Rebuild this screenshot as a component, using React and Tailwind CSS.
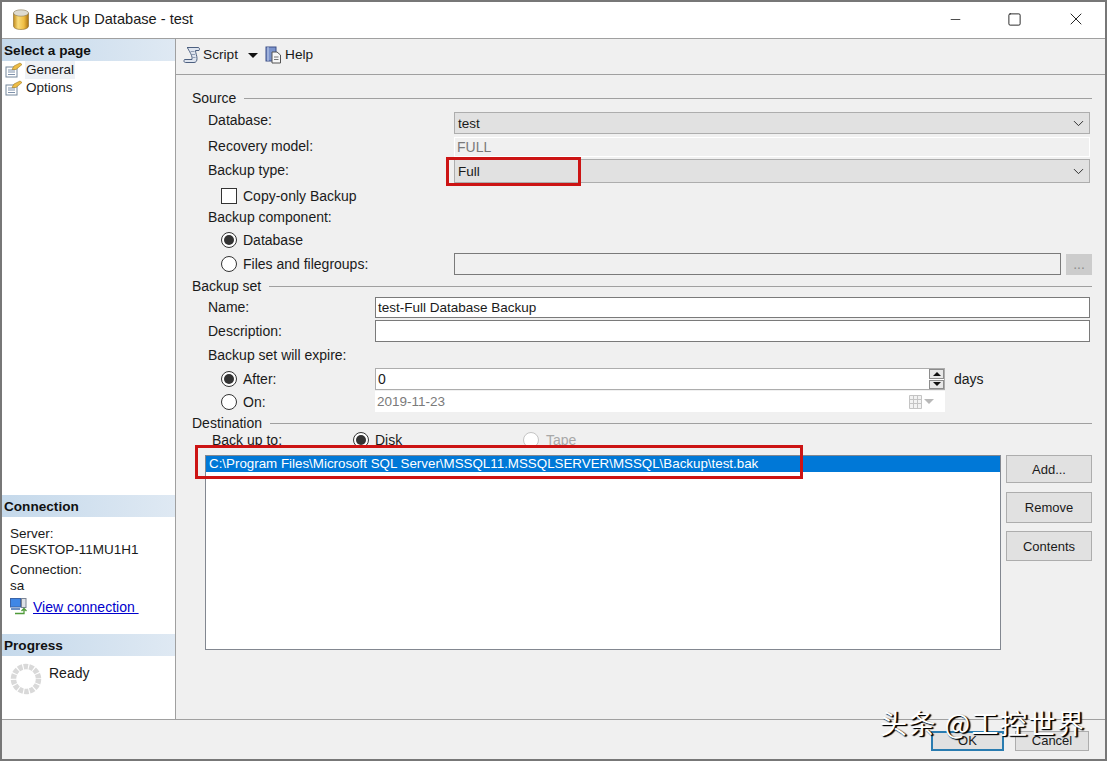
import React from 'react';
import { ChevronDown, Minus, Square, X } from 'lucide-react';

const DbIcon = () => (
    <svg width="18" height="21" viewBox="0 0 18 21" className="shrink-0">
        <defs>
            <linearGradient id="gold" x1="0" x2="1" y1="0" y2="0">
                <stop offset="0" stopColor="#c08a1a" />
                <stop offset="0.3" stopColor="#f9dc7c" />
                <stop offset="0.7" stopColor="#efbd42" />
                <stop offset="1" stopColor="#a9700f" />
            </linearGradient>
        </defs>
        <path d="M1.500 4v13c0 2 3 3.500 7.500 3.500s7.500-1.500 7.500-3.500V4z" fill="url(#gold)" stroke="#8a6a2a" strokeWidth="0.6" />
        <ellipse cx="9" cy="4" rx="7.500" ry="3.200" fill="#dedbd0" stroke="#8a7a55" strokeWidth="0.6" />
    </svg>
);

const ScriptIcon = () => (
    <svg width="18" height="18" viewBox="0 0 18 18" className="shrink-0">
        <path d="M4 1.500h11c1.500 0 2 1.500 1 3h-3.500c0 2.500 1.500 5 1.500 8 0 2.500-1 4-3 4H2.500C1 16.500.500 15 1.500 13.500H9c.5-3-1-5.500-2.500-8C5.500 4 5 2 4 1.500z" fill="#dfe5ef" stroke="#4d6080" strokeWidth="1" />
        <path d="M7.500 5.500h4M8.500 8.500h3.500M9.500 11.500h3" stroke="#7c8ba6" strokeWidth="0.8" />
    </svg>
);

const HelpIcon = () => (
    <svg width="17" height="18" viewBox="0 0 17 18" className="shrink-0">
        <rect x="1" y="1" width="10" height="14" fill="#7b93cc" stroke="#3c4f86" />
        <path d="M3 1v14" stroke="#c3cfea" />
        <path d="M7 6h5l3.500 3v8H7z" fill="#f7f7f7" stroke="#555555" />
        <path d="M9 11h4.500M9 13.500h4.500" stroke="#777777" />
    </svg>
);

const PageIcon = () => (
    <svg width="18" height="16" viewBox="0 0 18 16" className="shrink-0">
        <rect x="1" y="5" width="11" height="10" fill="#fff" stroke="#74879c" />
        <path d="M3 8h7M3 10h7M3 12.500h7" stroke="#7f92ab" />
        <path d="M7 7.500 9 4l6-3 2 1.500-6 5z" fill="#eebd47" stroke="#9e7a22" strokeWidth="0.6" />
    </svg>
);

const ConnIcon = () => (
    <svg width="17" height="18" viewBox="0 0 17 18" className="shrink-0">
        <rect x="0.500" y="0.500" width="10" height="8.500" fill="#3f87e6" stroke="#3a64a8" />
        <rect x="11.500" y="0.500" width="4.500" height="9" fill="#dde1e7" stroke="#7b8494" />
        <path d="M1 10h9v2H1z" fill="#6d90c4" />
        <path d="M5 15.500h9V11M11.500 13l2.500-2.500 2.500 2.500" fill="none" stroke="#4f9a3a" strokeWidth="1.300" />
    </svg>
);

const Spinner = () => (
    <svg width="32" height="32" viewBox="0 0 32 32" className="shrink-0">
        <circle cx="16" cy="16" r="12.500" fill="none" stroke="#d9d9d9" strokeWidth="5.500" strokeDasharray="4.500 1.110" />
    </svg>
);

const Radio = ({ checked, disabled }) => (
    <span className={`flex h-4 w-4 shrink-0 items-center justify-center rounded-full border bg-white ${disabled ? 'border-[#c4c4c4]' : 'border-[#333333]'}`}>
        {checked && <span className="h-[10px] w-[10px] rounded-full bg-[#333333]" />}
    </span>
);

const Section = ({ title, className }) => (
    <div className={`flex h-4 items-center gap-2 pl-4 pr-[13px] ${className}`}>
        <span>{title}</span>
        <span className="h-px flex-1 bg-[#a0a0a0]" />
    </div>
);

const Combo = ({ value, className }) => (
    <div className={`flex w-[636px] items-center justify-between border border-[#adadad] bg-[#e1e1e1] pl-[3px] pr-[2px] text-[13.500px] ${className}`}>
        <span className="pt-[1px]">{value}</span>
        <ChevronDown size={17} strokeWidth={1.300} className="text-[#222222]" />
    </div>
);

const SideHeader = ({ title }) => (
    <div className="flex h-[22px] items-center bg-gradient-to-r from-[#c5d9eb] to-[#dfe9f3] pl-[2px] pt-[2px] text-[13.600px] font-bold text-[#111111]">{title}</div>
);

const SideButton = ({ label, className }) => (
    <button className={`flex w-[86px] items-center justify-center border border-[#adadad] bg-[#e1e1e1] text-[13px] ${className}`}>{label}</button>
);

export default function App() {
    return (
        <div className="relative flex h-[761px] w-[1107px] flex-col overflow-hidden border-2 border-[#777777] bg-[#f0f0f0] font-['Liberation_Sans',sans-serif] text-[14px] leading-none text-[#1a1a1a]">
            <header className="flex h-[37px] shrink-0 items-center border-b border-[#a0a0a0] bg-white pb-[2px] pl-[10px]">
                <DbIcon />
                <span className="ml-[5px] text-[14.600px]">Back Up Database - test</span>
                <div className="ml-auto flex items-center text-[#111111]">
                    <Minus size={15} strokeWidth={1.200} className="mr-[44px]" />
                    <Square size={15} strokeWidth={1.400} className="mr-[44px]" />
                    <X size={20} strokeWidth={1.100} className="mr-[19px]" />
                </div>
            </header>

            <div className="flex h-[680px] shrink-0">
                <aside className="flex w-[174px] shrink-0 flex-col border-r border-[#a0a0a0] bg-white">
                    <SideHeader title="Select a page" />
                    <div className="flex h-[18px] items-center pl-[3px] text-[13.500px]">
                        <PageIcon />
                        <span className="ml-[2px] bg-[#eef1f5] px-[1px] py-[2px]">General</span>
                    </div>
                    <div className="flex h-[18px] items-center pl-[3px] text-[13.500px]">
                        <PageIcon />
                        <span className="ml-[3px]">Options</span>
                    </div>

                    <div className="mt-auto">
                        <SideHeader title="Connection" />
                        <div className="pl-[8px] pt-[9px] text-[13.500px]">
                            <div className="flex h-4 items-center">Server:</div>
                            <div className="flex h-4 items-center">DESKTOP-11MU1H1</div>
                            <div className="mt-1 flex h-4 items-center">Connection:</div>
                            <div className="flex h-4 items-center">sa</div>
                            <div className="mt-[4px] flex h-[18px] items-center">
                                <ConnIcon />
                                <span className="ml-[6px] text-[14px] text-[#0000cc] underline">View connection&nbsp;</span>
                            </div>
                        </div>
                        <div className="mt-[18px]">
                            <SideHeader title="Progress" />
                        </div>
                        <div className="flex h-[63px] pl-[8px] pt-[7px]">
                            <Spinner />
                            <span className="ml-[7px] mt-[3px]">Ready</span>
                        </div>
                    </div>
                </aside>

                <main className="flex min-w-0 flex-1 flex-col">
                    <div className="flex h-[36px] shrink-0 items-center border-b border-[#a0a0a0] pb-[3px] pl-[7px] text-[13.700px]">
                        <ScriptIcon />
                        <span className="ml-[2px]">Script</span>
                        <span className="ml-[10px] h-0 w-0 border-x-[5px] border-t-[5px] border-x-transparent border-t-[#111111]" />
                        <span className="ml-[7px]"><HelpIcon /></span>
                        <span className="ml-[3px]">Help</span>
                    </div>

                    <Section title="Source" className="mt-[15px]" />
                    <div className="mt-[6px] flex h-[22px] pl-[32px]">
                        <span className="w-[246px] pt-[1px]">Database:</span>
                        <Combo value="test" className="h-[22px]" />
                    </div>
                    <div className="mt-[3px] flex h-[20px] items-center pl-[32px]">
                        <span className="mb-[2px] w-[246px]">Recovery model:</span>
                        <div className="flex h-[20px] w-[636px] items-center border border-white pl-[2px] text-[#7a7a7a]">FULL</div>
                    </div>
                    <div className="mt-[2px] flex h-[24px] items-center pl-[32px]">
                        <span className="mb-[2px] w-[246px]">Backup type:</span>
                        <Combo value="Full" className="h-[24px]" />
                    </div>
                    <label className="mt-[3px] flex h-[20px] items-center pl-[45px]">
                        <span className="h-4 w-4 shrink-0 border border-[#333333] bg-white" />
                        <span className="ml-[6px]">Copy-only Backup</span>
                    </label>
                    <div className="mt-[3px] flex h-4 items-center pl-[32px]">Backup component:</div>
                    <div className="mt-[7px] flex h-4 items-center pl-[45px]">
                        <Radio checked />
                        <span className="ml-[6px]">Database</span>
                    </div>
                    <div className="mt-[5px] flex h-[22px] items-center pl-[45px]">
                        <Radio />
                        <span className="ml-[6px] w-[211px]">Files and filegroups:</span>
                        <div className="h-[22px] w-[607px] border border-[#7a7a7a]" />
                        <div className="ml-[5px] flex h-[21px] w-[26px] items-center justify-center bg-[#cccccc] text-[#8c8c8c]">...</div>
                    </div>

                    <Section title="Backup set" className="mt-[3px]" />
                    <div className="mt-[3px] flex h-[21px] items-center pl-[32px]">
                        <span className="mb-[2px] w-[167px]">Name:</span>
                        <div className="flex h-[21px] w-[715px] items-center border border-[#7a7a7a] bg-white pl-[2px] text-[13.500px]">test-Full Database Backup</div>
                    </div>
                    <div className="mt-[2px] flex h-[22px] items-center pl-[32px]">
                        <span className="w-[167px]">Description:</span>
                        <div className="h-[22px] w-[715px] border border-[#7a7a7a] bg-white" />
                    </div>
                    <div className="mt-[5px] flex h-4 items-center pl-[32px]">Backup set will expire:</div>
                    <div className="mt-[5px] flex h-[22px] items-center pl-[45px]">
                        <Radio checked />
                        <span className="w-[138px] pl-[6px]">After:</span>
                        <div className="flex h-[22px] w-[570px] items-center justify-between border border-[#adadad] bg-white pl-[2px]">
                            <span>0</span>
                            <div className="flex h-[20px] w-[15px] flex-col gap-px">
                                <span className="flex flex-1 items-center justify-center border border-[#8c8c8c] bg-[#e8e8e8]"><span className="h-0 w-0 border-x-[4px] border-b-[4px] border-x-transparent border-b-[#111111]" /></span>
                                <span className="flex flex-1 items-center justify-center border border-[#8c8c8c] bg-[#e8e8e8]"><span className="h-0 w-0 border-x-[4px] border-t-[4px] border-x-transparent border-t-[#111111]" /></span>
                            </div>
                        </div>
                        <span className="ml-[9px]">days</span>
                    </div>
                    <div className="mt-px flex h-[21px] items-center pl-[45px]">
                        <Radio />
                        <span className="w-[138px] pl-[6px]">On:</span>
                        <div className="flex h-[21px] w-[570px] items-center justify-between bg-white pl-[2px] pr-[5px] text-[13.500px] text-[#7a7a7a]">
                            <span>2019-11-23</span>
                            <div className="mr-[6px] flex items-center gap-[2px]">
                                <svg width="13" height="14" viewBox="0 0 13 14">
                                    <path d="M.5.500h12v13H.500zM.5 4.500h12M.5 8.500h12M4.500.500v13M8.500.500v13" fill="#f2f2f2" stroke="#c4c4c4" />
                                </svg>
                                <span className="h-0 w-0 border-x-[5px] border-t-[5px] border-x-transparent border-t-[#b8b8b8]" />
                            </div>
                        </div>
                    </div>

                    <Section title="Destination" className="mt-[3px]" />
                    <div className="mt-px flex h-4 items-center pl-[36px]">
                        <span className="w-[141px]">Back up to:</span>
                        <Radio checked />
                        <span className="ml-[6px] w-[148px]">Disk</span>
                        <Radio disabled />
                        <span className="ml-[7px] text-[#a8a8a8]">Tape</span>
                    </div>
                    <div className="mt-[7px] flex pl-[29px]">
                        <div className="h-[195px] w-[796px] border border-[#828790] bg-white">
                            <div className="flex h-[16px] items-center bg-[#0078d7] pl-[3px] text-[13.350px] text-white">C:\Program Files\Microsoft SQL Server\MSSQL11.MSSQLSERVER\MSSQL\Backup\test.bak</div>
                        </div>
                        <div className="ml-[5px] flex flex-col">
                            <SideButton label="Add..." className="h-[28px]" />
                            <SideButton label="Remove" className="mt-[9px] h-[31px]" />
                            <SideButton label="Contents" className="mt-[8px] h-[30px]" />
                        </div>
                    </div>
                </main>
            </div>

            <footer className="flex flex-1 items-center justify-end border-t border-[#a0a0a0] pt-[2px] pr-[16px] text-[13px]">
                <button className="h-[20px] w-[73px] border-2 border-[#2a7cb0] bg-[#e1e1e1]">OK</button>
                <button className="ml-[11px] h-[20px] w-[74px] border border-[#adadad] bg-[#e1e1e1]">Cancel</button>
            </footer>

            {/* annotations + watermark sit on top of the dialog */}
            <div className="absolute left-[444px] top-[155px] h-[29px] w-[135px] border-[3px] border-[#cc1414]" />
            <div className="absolute left-[193px] top-[443px] h-[34px] w-[608px] border-[3px] border-[#cc1414]" />
            <div className="absolute left-[878px] top-[705px] whitespace-nowrap font-['Noto_Sans_CJK_SC',sans-serif] text-[27px] leading-[32px] tracking-[1.500px] text-white [text-shadow:1px_1px_1px_#000,2px_1px_1px_#000]">头条 @工控世界</div>
        </div>
    );
}
